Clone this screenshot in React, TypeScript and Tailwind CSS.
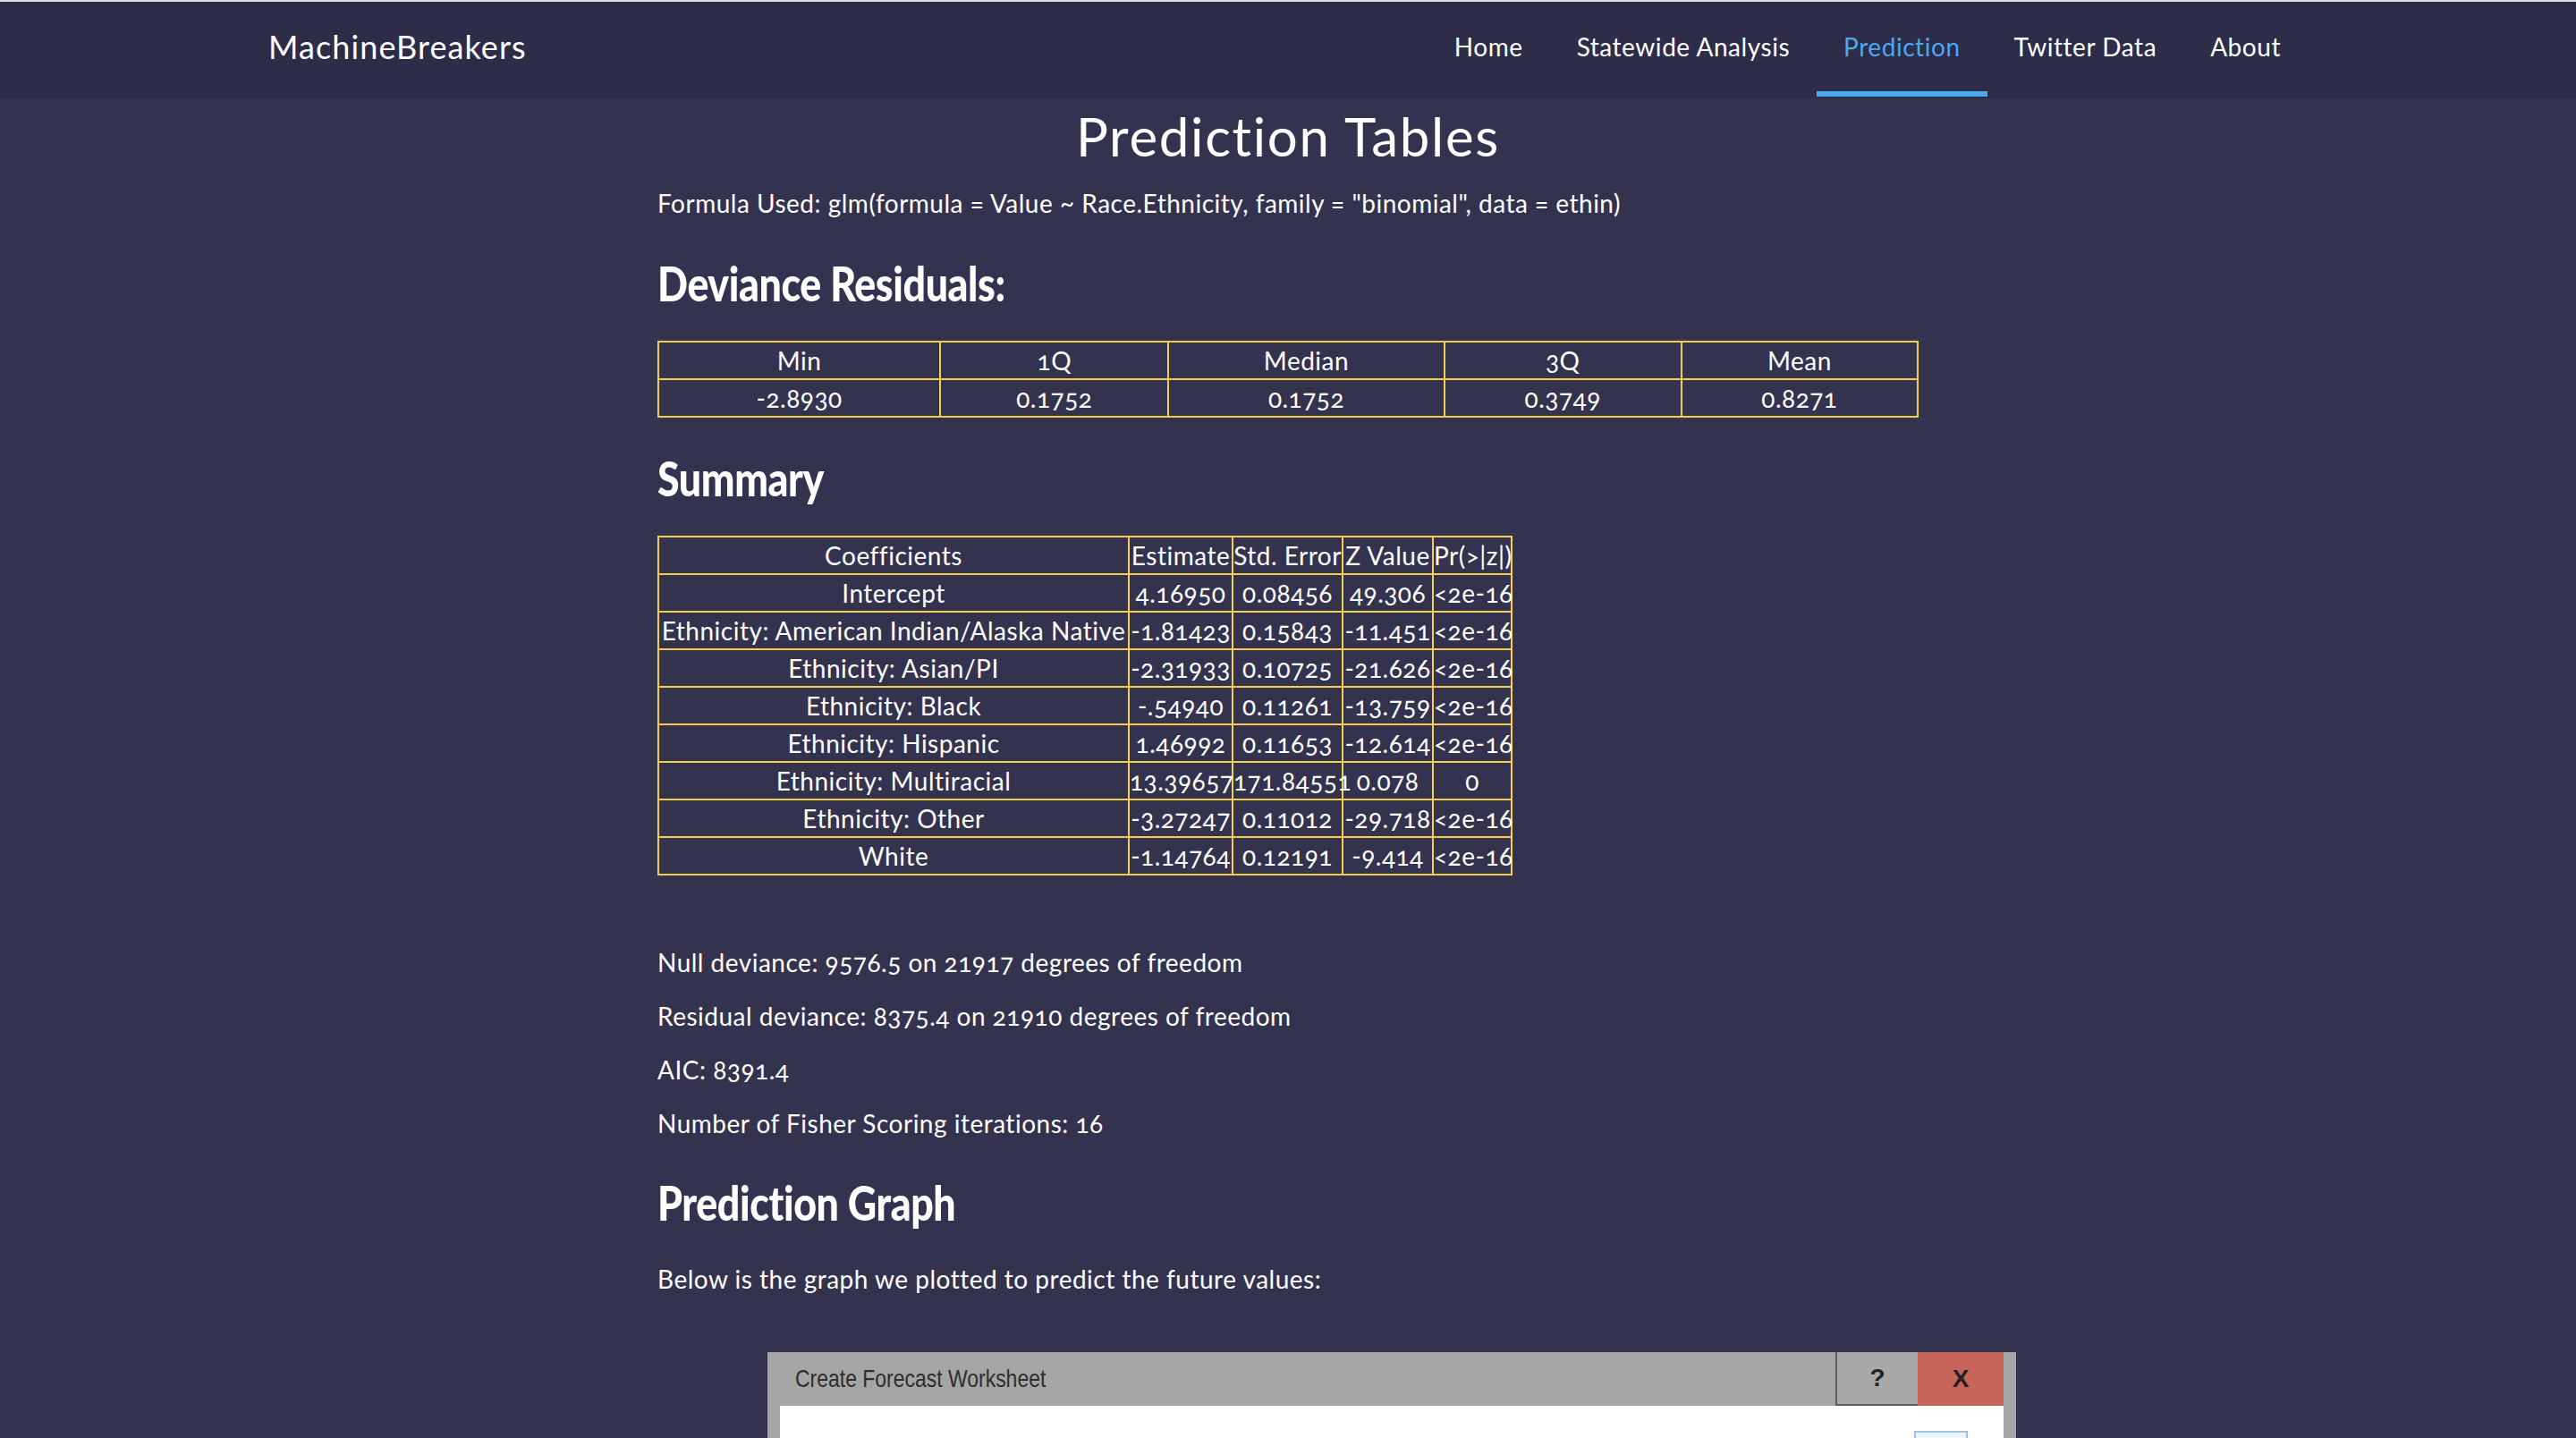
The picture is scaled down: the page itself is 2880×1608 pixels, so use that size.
const navLinks = [
  { label: "Home", active: false },
  { label: "Statewide Analysis", active: false },
  { label: "Prediction", active: true },
  { label: "Twitter Data", active: false },
  { label: "About", active: false },
];

const devHead = ["Min", "1Q", "Median", "3Q", "Mean"];
const devVals = ["-2.8930", "0.1752", "0.1752", "0.3749", "0.8271"];
const devCols = ["w-[315px]", "w-[255px]", "w-[308px]", "w-[265px]", "w-[264px]"];

const sumHead = ["Coefficients", "Estimate", "Std. Error", "Z Value", "Pr(>|z|)"];
const sumCols = ["w-[526px]", "w-[116px]", "w-[123px]", "w-[101px]", "w-[88px]"];
const sumRows = [
  ["Intercept", "4.16950", "0.08456", "49.306", "<2e-16"],
  ["Ethnicity: American Indian/Alaska Native", "-1.81423", "0.15843", "-11.451", "<2e-16"],
  ["Ethnicity: Asian/PI", "-2.31933", "0.10725", "-21.626", "<2e-16"],
  ["Ethnicity: Black", "-.54940", "0.11261", "-13.759", "<2e-16"],
  ["Ethnicity: Hispanic", "1.46992", "0.11653", "-12.614", "<2e-16"],
  ["Ethnicity: Multiracial", "13.39657", "171.84551", "0.078", "0"],
  ["Ethnicity: Other", "-3.27247", "0.11012", "-29.718", "<2e-16"],
  ["White", "-1.14764", "0.12191", "-9.414", "<2e-16"],
];

const stats = [
  "Null deviance: 9576.5 on 21917 degrees of freedom",
  "Residual deviance: 8375.4 on 21910 degrees of freedom",
  "AIC: 8391.4",
  "Number of Fisher Scoring iterations: 16",
];

const headingCls =
  "inline-block origin-left scale-x-[0.845] font-['Lato',sans-serif] font-black text-[53px] leading-[60px] tracking-[-0.5px] text-white whitespace-nowrap";

const cellCls =
  "h-[42px] border-2 border-[#f5cf4b] p-0 text-center align-middle whitespace-nowrap text-[28px] leading-[36px] font-normal tracking-[0.5px]";

export default function App() {
  return (
    <div className="h-[1608px] overflow-hidden bg-[#34334f] font-['Lato','Open_Sans',sans-serif] text-white oldstyle-nums">
      <nav className="h-[110px] border-t-2 border-[#dcdce0] bg-[#2d2c49] pb-[2px]">
        <div className="mx-auto flex h-full w-[2280px] items-stretch justify-between">
          <div className="flex items-center pb-[6px] text-[36px] tracking-[1.1px] text-white">MachineBreakers</div>
          <ul className="flex items-stretch">
            {navLinks.map((l) => (
              <li
                key={l.label}
                className={
                  l.active
                    ? "flex items-center border-b-[6px] border-[#4aa9ef] px-[30px] text-[28px] tracking-[0.55px] text-[#4aa9ef]"
                    : "flex items-center border-b-[6px] border-transparent px-[30px] text-[28px] tracking-[0.55px] text-white"
                }
              >
                {l.label}
              </li>
            ))}
          </ul>
        </div>
      </nav>

      <main className="mx-auto w-[1410px]">
        <h1 className="mt-[6px] text-center text-[60px] leading-[72px] font-normal tracking-[1.7px]">Prediction Tables</h1>
        <p className="mt-[19px] text-[28px] leading-[40px] tracking-[0.5px]">
          Formula Used: glm(formula = Value ~ Race.Ethnicity, family = "binomial", data = ethin)
        </p>

        <div className="mt-[40px] h-[60px]">
          <h2 className={headingCls}>Deviance Residuals:</h2>
        </div>
        <table className="mt-[34px] w-[1410px] table-fixed border-collapse">
          <colgroup>
            {devCols.map((c, i) => (
              <col key={i} className={c} />
            ))}
          </colgroup>
          <thead>
            <tr>
              {devHead.map((h) => (
                <th key={h} className={cellCls}>
                  {h}
                </th>
              ))}
            </tr>
          </thead>
          <tbody>
            <tr>
              {devVals.map((v, i) => (
                <td key={i} className={cellCls}>
                  {v}
                </td>
              ))}
            </tr>
          </tbody>
        </table>

        <div className="mt-[38px] h-[60px]">
          <h2 className={headingCls}>Summary</h2>
        </div>
        <table className="mt-[34px] w-[954px] table-fixed border-collapse">
          <colgroup>
            {sumCols.map((c, i) => (
              <col key={i} className={c} />
            ))}
          </colgroup>
          <thead>
            <tr>
              {sumHead.map((h) => (
                <th key={h} className={cellCls}>
                  {h}
                </th>
              ))}
            </tr>
          </thead>
          <tbody>
            {sumRows.map((r) => (
              <tr key={r[0]}>
                {r.map((v, i) => (
                  <td key={i} className={cellCls}>
                    {v}
                  </td>
                ))}
              </tr>
            ))}
          </tbody>
        </table>

        <div className="mt-[76px]">
          {stats.map((s) => (
            <p key={s} className="mb-[18px] text-[28px] leading-[42px] tracking-[0.5px]">
              {s}
            </p>
          ))}
        </div>

        <div className="mt-[38px] h-[60px]">
          <h2 className={headingCls}>Prediction Graph</h2>
        </div>
        <p className="mt-[34px] text-[28px] leading-[42px] tracking-[0.5px]">Below is the graph we plotted to predict the future values:</p>

        <div className="mt-[61px] ml-[123px] flex h-[600px] w-[1396px] flex-col bg-[#a5a5a5] px-[14px] pb-[14px]">
          <div className="flex h-[60px] items-stretch">
            <div className="flex flex-1 items-center pl-[17px]">
              <span className="inline-block origin-left scale-x-[0.82] whitespace-nowrap font-['Liberation_Sans','Arial',sans-serif] text-[28px] text-[#2e2e2e]">
                Create Forecast Worksheet
              </span>
            </div>
            <div className="flex w-[92px] items-center justify-center border-b-2 border-l-2 border-[#5e5e5e] bg-[#a9a9a9] font-['Liberation_Sans','Arial',sans-serif] text-[28px] font-bold text-[#222]">
              ?
            </div>
            <div className="flex w-[96px] items-center justify-center bg-[#c8655a] font-['Liberation_Sans','Arial',sans-serif] text-[28px] font-bold text-[#222]">
              X
            </div>
          </div>
          <div className="flex flex-1 justify-end bg-white pt-[28px] pr-[40px]">
            <div className="h-[40px] w-[60px] border-2 border-[#9cc3e6] bg-[#eef5fc]" />
          </div>
        </div>
      </main>
    </div>
  );
}
